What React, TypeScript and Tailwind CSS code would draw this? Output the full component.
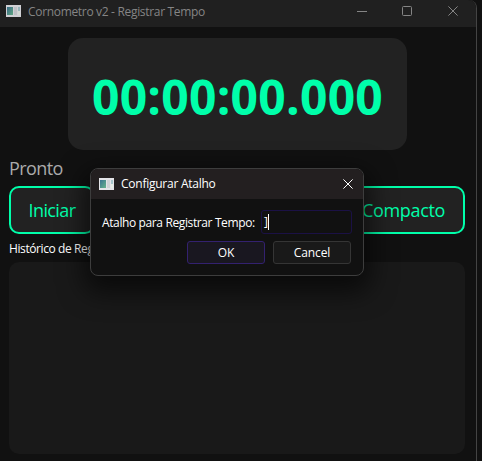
import React from "react";

function AppIcon() {
  return (
    <svg width="15" height="13" viewBox="0 0 15 13" className="shrink-0">
      <defs>
        <linearGradient id="screen" x1="0" y1="0" x2="1" y2="1">
          <stop offset="0" stopColor="#3b7391" />
          <stop offset="1" stopColor="#68b48c" />
        </linearGradient>
      </defs>
      <rect width="15" height="12" fill="#e4e4e8" />
      <rect x="1" y="2" width="6" height="8" fill="url(#screen)" />
      <rect x="8" y="2" width="3" height="8" fill="#d0d2d6" />
      <rect x="12" y="2" width="2" height="4" fill="#a6c5cb" />
      <rect x="12" y="6" width="2" height="4" fill="#e6eee6" />
    </svg>
  );
}

function CloseIcon() {
  return (
    <svg width="10" height="10" viewBox="0 0 10 10" fill="none" stroke="currentColor">
      <path d="M.4.4 9.6 9.6M9.6.4.4 9.6" />
    </svg>
  );
}

function TitleBar() {
  return (
    <header className="flex h-[27px] shrink-0 items-start rounded-tr-lg bg-[#202020] pl-1.5 text-[#858585]">
      <div className="mt-[5px] opacity-90"><AppIcon /></div>
      <span className="ml-[7px] mt-1 w-[180px] whitespace-nowrap text-xs leading-4 tracking-[-0.32px]">
        Cornometro v2 - Registrar Tempo
      </span>
      <div className="ml-auto mr-[18px] mt-1.5 flex items-center">
        <svg width="10" height="10" viewBox="0 0 10 10"><path d="M0 5.5H10" stroke="currentColor" /></svg>
        <svg className="ml-[35px] mr-9" width="10" height="10" viewBox="0 0 10 10"><rect x=".5" y=".5" width="9" height="9" rx="1" fill="none" stroke="currentColor" /></svg>
        <CloseIcon />
      </div>
    </header>
  );
}

function ShortcutDialog() {
  return (
    <section className="absolute left-[90px] top-[168px] h-[108px] w-[274px] overflow-hidden rounded-lg border border-[#3d3d3d] bg-[#111111] text-white shadow-[0_10px_26px_6px_rgba(0,0,0,0.6)]">
      <header className="flex h-[30px] items-center bg-[#231f20] pl-2 pr-[10px]">
        <AppIcon />
        <span className="ml-[7px] whitespace-nowrap text-xs leading-4 tracking-[-0.25px]">Configurar Atalho</span>
        <span className="ml-auto"><CloseIcon /></span>
      </header>
      <div className="flex flex-col gap-[7px] pl-[11px] pr-3 pt-[11px]">
        <div className="flex h-6 items-center">
          <label className="w-[159px] shrink-0 whitespace-nowrap pt-0.5 text-xs leading-4 tracking-[-0.38px]">Atalho para Registrar Tempo:</label>
          <div className="flex h-6 w-[91px] shrink-0 items-center rounded-[3px] border border-[#1b1145] pl-0.5 text-xs leading-4">
            <span className="w-1">]</span>
            <span className="h-4 w-px bg-white" />
          </div>
        </div>
        <div className="flex justify-end gap-2">
          <button className="h-[23px] w-[78px] rounded-[3px] border border-[#33216f] bg-[#191720] text-xs leading-4 tracking-[-0.2px]">OK</button>
          <button className="h-[23px] w-[78px] rounded-[3px] border border-[#353535] bg-[#191919] text-xs leading-4 tracking-[-0.1px]">Cancel</button>
        </div>
      </div>
    </section>
  );
}

export default function App() {
  return (
    <div className="relative h-[461px] w-[482px] overflow-hidden bg-[#111111] font-['Open_Sans','Noto_Sans',sans-serif]">
      <main className="flex h-[461px] w-[477px] flex-col rounded-tr-lg border-r border-[#444444]">
        <TitleBar />
        <div className="flex flex-col pl-[9px] pr-[11px] pt-[11px]">
          <div className="flex h-[112px] w-[339px] items-center justify-center self-center rounded-[15px] bg-[#222222] pl-px pt-1.5 text-[48px] font-bold leading-none tracking-[0.25px] text-[#00ffaa]">
            <span>00:00:00.000</span>
          </div>
          <p className="mt-[6px] h-[30px] text-lg leading-6 tracking-[-0.6px] text-[#aaaaaa]">Pronto</p>
          <div className="flex h-12 justify-between text-lg text-[#00ffaa]">
            <button className="w-[86px] rounded-[10px] border-2 border-[#00ffaa] bg-[#222222] tracking-[-0.6px]">Iniciar</button>
            <button className="w-[123px] rounded-[10px] border-2 border-[#00ffaa] bg-[#222222] tracking-[-0.35px]">Compacto</button>
          </div>
          <p className="mt-[7px] h-[21px] text-xs leading-4 tracking-[-0.4px] text-white">Histórico de Registros:</p>
          <div className="h-48 rounded-[10px] bg-[#191919]" />
        </div>
      </main>
      <ShortcutDialog />
    </div>
  );
}
